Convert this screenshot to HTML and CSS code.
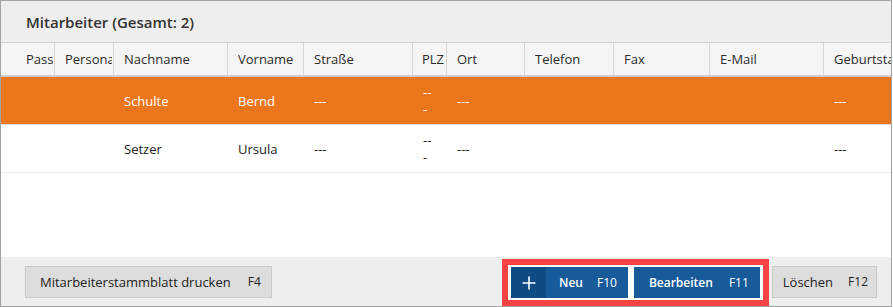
FILE: index.html
```html
<!DOCTYPE html>
<html lang="de">
    <head>
        <meta charset="UTF-8" />
        <title>Mitarbeiter</title>
        <link rel="stylesheet" href="styles.css">
    </head>
    <body>
        <div id="panel">
            <div class="panel-title">Mitarbeiter (Gesamt: 2)</div>
            <div class="grid">
                <div class="row head">
                    <div class="cell c1"><span>Passbild</span></div>
                    <div class="cell c2"><span>Personalnummer</span></div>
                    <div class="cell c3"><span>Nachname</span></div>
                    <div class="cell c4"><span>Vorname</span></div>
                    <div class="cell c5"><span>Straße</span></div>
                    <div class="cell c6"><span>PLZ</span></div>
                    <div class="cell c7"><span>Ort</span></div>
                    <div class="cell c8"><span>Telefon</span></div>
                    <div class="cell c9"><span>Fax</span></div>
                    <div class="cell c10"><span>E-Mail</span></div>
                    <div class="cell c11"><span>Geburtstag</span></div>
                </div>
                <div class="row selected">
                    <div class="cell c1"></div>
                    <div class="cell c2"></div>
                    <div class="cell c3">Schulte</div>
                    <div class="cell c4">Bernd</div>
                    <div class="cell c5">---</div>
                    <div class="cell c6">---</div>
                    <div class="cell c7">---</div>
                    <div class="cell c8"></div>
                    <div class="cell c9"></div>
                    <div class="cell c10"></div>
                    <div class="cell c11">---</div>
                </div>
                <div class="row">
                    <div class="cell c1"></div>
                    <div class="cell c2"></div>
                    <div class="cell c3">Setzer</div>
                    <div class="cell c4">Ursula</div>
                    <div class="cell c5">---</div>
                    <div class="cell c6">---</div>
                    <div class="cell c7">---</div>
                    <div class="cell c8"></div>
                    <div class="cell c9"></div>
                    <div class="cell c10"></div>
                    <div class="cell c11">---</div>
                </div>
            </div>
            <div class="footer">
                <button class="btn">Mitarbeiterstammblatt drucken <span class="key">F4</span></button>
                <div class="actions">
                    <div class="highlight">
                        <button class="btn blue with-icon">
                            <span class="icon">
                                <svg width="14" height="14" viewBox="0 0 14 14">
                                    <path d="M7 0.5V13.5M0.5 7H13.5" stroke="#fff" stroke-width="1.6" fill="none" />
                                </svg>
                            </span>
                            <span class="label">Neu</span> <span class="key">F10</span>
                        </button>
                        <button class="btn blue"><span class="label">Bearbeiten</span> <span class="key">F11</span></button>
                    </div>
                    <button class="btn compact">Löschen <span class="key">F12</span></button>
                </div>
            </div>
        </div>
    </body>
</html>
```

FILE: styles.css
```css
body {
    margin: 0;
    background-color: #fff;
    font-family: "Open Sans", "Noto Sans", sans-serif;
    font-size: 13px;
    color: #222;
}
#panel {
    width: 892px;
    height: 307px;
    box-sizing: border-box;
    border: 1px solid #a3a3a3;
    display: flex;
    flex-direction: column;
    overflow: hidden;
}
.panel-title {
    height: 41px;
    border-bottom: 1px solid #d2d2d2;
    background-color: #eeeeee;
    padding-left: 25px;
    display: flex;
    align-items: center;
    font-size: 15px;
    font-weight: 600;
    color: #333;
}
.grid {
    flex: 1;
    overflow: hidden;
}
.row {
    display: flex;
    height: 47px;
    border-bottom: 1px solid #ececec;
    align-items: center;
}
.row.head {
    height: 32px;
    background-color: #f5f5f5;
    border-bottom: 2px solid #cfcfcf;
    align-items: stretch;
}
.row.selected {
    background-color: #ec761e;
    color: #fff;
    border-bottom-color: #dcdcdc;
}
.cell {
    flex: none;
    box-sizing: border-box;
    padding: 0 10px;
    white-space: nowrap;
    overflow: hidden;
}
.head .cell {
    border-right: 1px solid #d6d6d6;
    color: #2b2b2b;
    line-height: 32px;
}
.head .cell span {
    display: block;
    overflow: hidden;
}
.c1 { width: 54px; padding-left: 25px; padding-right: 1px; }
.c2 { width: 59px; padding-right: 1px; }
.c3 { width: 114px; }
.c4 { width: 76px; }
.c5 { width: 109px; }
.c6 {
    width: 34px;
    padding-right: 14px;
    white-space: normal;
    overflow-wrap: anywhere;
    line-height: 17px;
}
.head .c6 { padding: 0 0 0 9px; }
.c7 { width: 78px; }
.c8 { width: 89px; }
.c9 { width: 96px; }
.c10 { width: 114px; }
.c11 { width: 120px; }
.footer {
    height: 49px;
    flex: none;
    background-color: #eeeeee;
    display: flex;
    align-items: center;
    justify-content: space-between;
    padding: 0 14px 0 24px;
}
.actions {
    display: flex;
    align-items: center;
    gap: 3px;
}
.highlight {
    display: flex;
    gap: 6px;
    border: 6px solid #f44343;
    background-color: #fff;
    padding: 2px 3px;
    margin-bottom: -2px;
}
.btn {
    height: 32px;
    box-sizing: border-box;
    border: 1px solid #c9c9c9;
    background-color: #dddddd;
    padding: 0 10px 0 14px;
    font-family: "Open Sans", "Noto Sans", sans-serif;
    font-size: 13px;
    color: #222;
    display: flex;
    align-items: center;
    gap: 17px;
    cursor: pointer;
}
.btn.compact {
    padding: 0 8px 0 10px;
    gap: 15px;
}
.btn .key {
    font-size: 12px;
}
.btn.blue {
    height: 31px;
    border: none;
    background-color: #185b9b;
    color: #fff;
    padding: 0 11px 0 15px;
    gap: 16px;
}
.btn.blue .label {
    font-size: 12px;
    font-weight: 600;
}
.btn.with-icon {
    padding-left: 0;
    gap: 0;
}
.with-icon .icon {
    width: 35px;
    height: 100%;
    background-color: #0f4b85;
    display: flex;
    align-items: center;
    justify-content: center;
    margin-right: 13px;
}
.with-icon .key {
    margin-left: 14px;
}
```
